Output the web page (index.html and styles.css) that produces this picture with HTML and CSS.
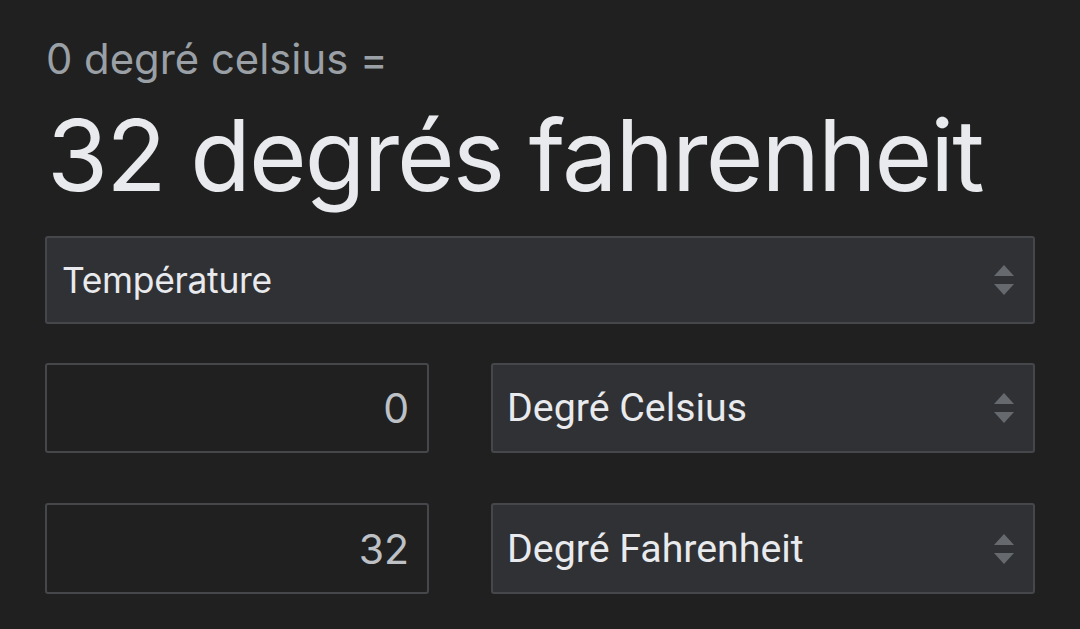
FILE: index.html
```html
<!DOCTYPE html>
<html lang="fr">
<head>
<meta charset="utf-8">
<link rel="stylesheet" href="styles.css">
</head>
<body>
<div class="card">
  <div class="lead">0 degré celsius =</div>
  <div class="result">32 degrés fahrenheit</div>
  <div class="select wide">
    <span class="label gs">Température</span>
    <svg class="arrows" viewBox="0 0 22 34" width="22" height="34"><path d="M11 2 L21 13 L1 13 Z M11 32 L21 21 L1 21 Z" fill="#666a6e"/></svg>
  </div>
  <div class="row">
    <div class="input">0</div>
    <div class="select">
      <span class="label">Degré Celsius</span>
      <svg class="arrows" viewBox="0 0 22 34" width="22" height="34"><path d="M11 2 L21 13 L1 13 Z M11 32 L21 21 L1 21 Z" fill="#666a6e"/></svg>
    </div>
  </div>
  <div class="row last">
    <div class="input">32</div>
    <div class="select">
      <span class="label">Degré Fahrenheit</span>
      <svg class="arrows" viewBox="0 0 22 34" width="22" height="34"><path d="M11 2 L21 13 L1 13 Z M11 32 L21 21 L1 21 Z" fill="#666a6e"/></svg>
    </div>
  </div>
</div>
</body>
</html>
```
FILE: styles.css
```css
html, body {
  margin: 0;
  padding: 0;
  background: #202020;
  height: 100%;
  overflow: hidden;
}
.card {
  padding: 28px 45px 0 45px;
  width: 990px;
  font-family: "Inter", "Open Sans", sans-serif;
}
.lead {
  color: #9aa0a6;
  font-size: 41.8px;
  line-height: 62px;
  padding-left: 1px;
}
.result {
  color: #e8eaed;
  font-size: 99px;
  line-height: 120px;
  margin-top: 5px;
  padding-left: 2px;
  letter-spacing: -2px;
}
.select {
  box-sizing: border-box;
  background: #303134;
  border: 2px solid #45474b;
  border-radius: 3px;
  display: flex;
  align-items: center;
  justify-content: space-between;
  padding: 0 18px 0 14px;
  height: 90px;
}
.select.wide {
  margin-top: 21px;
  height: 88px;
  padding-left: 15px;
}
.label {
  color: #e8eaed;
  font-family: "Roboto", sans-serif;
  font-size: 39.3px;
}
.label.gs {
  font-family: "Inter", "Open Sans", sans-serif;
  font-size: 35.4px;
  letter-spacing: -0.3px;
}
.arrows {
  display: block;
}
.row {
  display: flex;
  gap: 62px;
  margin-top: 39px;
}
.row.last {
  margin-top: 50px;
}
.row .select {
  flex: 1;
}
.input {
  box-sizing: border-box;
  width: 384px;
  height: 90px;
  border: 2px solid #45474b;
  border-radius: 3px;
  display: flex;
  align-items: center;
  justify-content: flex-end;
  padding-right: 18px;
  color: #bdc1c6;
  font-family: "Inter", "Open Sans", sans-serif;
  font-size: 41px;
}
.row.last .input,
.row.last .select {
  height: 91px;
}
```
